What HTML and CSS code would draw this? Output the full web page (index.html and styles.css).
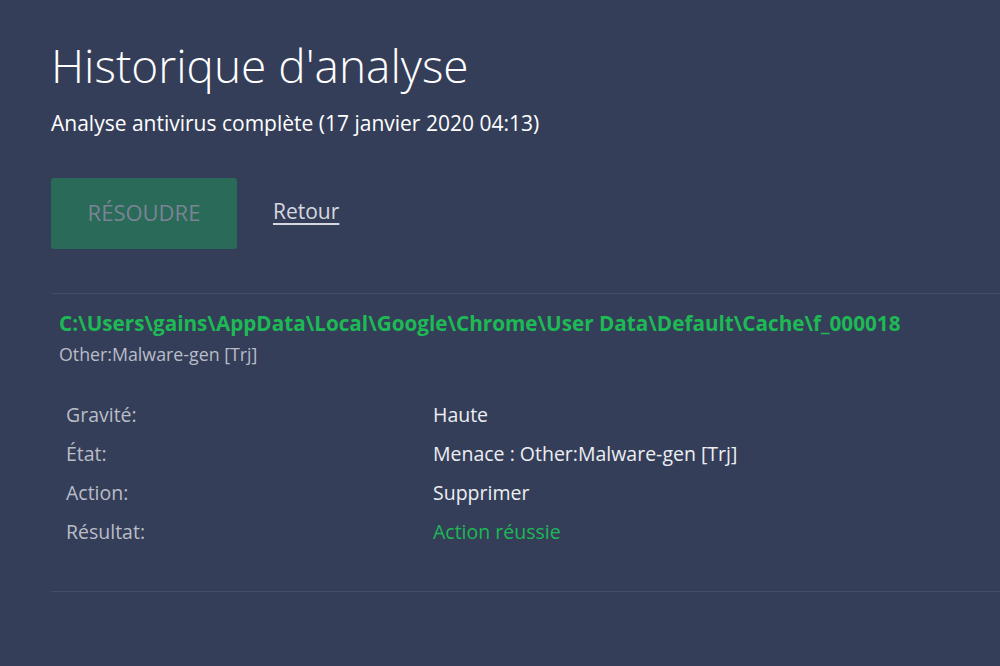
FILE: index.html
```html
<!DOCTYPE html>
<html lang="fr">
<head>
<meta charset="utf-8">
<title>Historique d'analyse</title>
<link rel="stylesheet" href="styles.css">
</head>
<body>
<main class="page">
  <h1 class="title">Historique d'analyse</h1>
  <p class="subtitle">Analyse antivirus complète (17 janvier 2020 04:13)</p>
  <div class="actions">
    <button class="btn-resolve" disabled>RÉSOUDRE</button>
    <a class="link-back" href="#">Retour</a>
  </div>
  <section class="item">
    <div class="item-path">C:\Users\gains\AppData\Local\Google\Chrome\User Data\Default\Cache\f_000018</div>
    <div class="item-threat">Other:Malware-gen [Trj]</div>
    <dl class="details">
      <dt>Gravité:</dt><dd>Haute</dd>
      <dt>État:</dt><dd>Menace : Other:Malware-gen [Trj]</dd>
      <dt>Action:</dt><dd>Supprimer</dd>
      <dt>Résultat:</dt><dd class="ok">Action réussie</dd>
    </dl>
  </section>
</main>
</body>
</html>
```
FILE: styles.css
```css
html, body {
  margin: 0;
  padding: 0;
  background: #353e59;
  height: 100%;
}
body {
  font-family: "Open Sans", Lato, sans-serif;
  color: #ffffff;
  overflow: hidden;
}
.page {
  padding: 35px 0 0 51px;
}
.title {
  margin: 0;
  font-weight: 300;
  font-size: 46px;
  line-height: 60px;
  color: #ffffff;
}
.subtitle {
  margin: 15px 0 0;
  font-size: 21px;
  line-height: 26px;
  color: #ffffff;
}
.actions {
  display: flex;
  align-items: center;
  gap: 36px;
  margin-top: 42px;
}
.btn-resolve {
  width: 186px;
  height: 71px;
  border: 0;
  border-radius: 3px;
  background: #2a6a58;
  color: #7b8395;
  font-family: inherit;
  font-size: 22px;
  line-height: 26px;
  padding: 0 0 4px;
}
.link-back {
  color: #d5d8e0;
  font-size: 21px;
  line-height: 26px;
  text-decoration: underline;
  text-underline-offset: 4px;
  margin-top: -6px;
}
.item {
  margin-top: 44px;
  border-top: 1px solid #444d67;
  border-bottom: 1px solid #444d67;
  padding: 17px 0 40px 8px;
}
.item-path {
  color: #1db954;
  font-weight: 700;
  font-size: 20.7px;
  line-height: 24px;
}
.item-threat {
  color: #b9bdc7;
  font-size: 17.8px;
  line-height: 20px;
  margin-top: 9px;
}
.details {
  display: grid;
  grid-template-columns: 367px auto;
  grid-auto-rows: 39px;
  align-items: center;
  margin: 31px 0 0 7px;
  font-size: 19.5px;
  line-height: 24px;
}
.details dt {
  color: #b9bdc7;
}
.details dd {
  margin: 0;
  color: #eceef2;
}
.details dd.ok {
  color: #1db954;
}
```
